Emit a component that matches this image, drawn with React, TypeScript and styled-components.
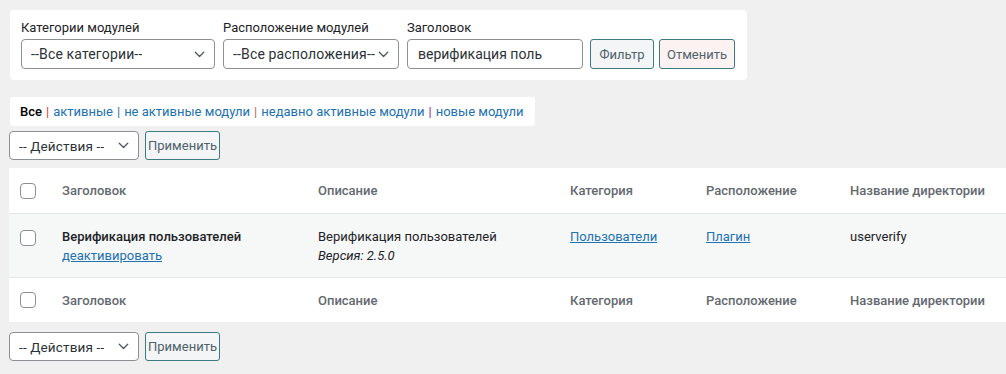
import React from "react";
import styled, { createGlobalStyle } from "styled-components";

const Global = createGlobalStyle`
  html, body { margin: 0; padding: 0; background: #f0f0f1; }
  body { font-family: Roboto, "Noto Sans", Arial, sans-serif; color: #1d2327; overflow: hidden; }
  * { box-sizing: border-box; }
`;

const Page = styled.div`
  width: 1006px;
  height: 374px;
  padding: 10px 0 0 9px;
  display: flex;
  flex-direction: column;
`;

const FilterPanel = styled.div`
  width: 737px;
  margin-left: 1px;
  background: #fff;
  border-radius: 4px;
  padding: 10px 11px 11px 11px;
  display: flex;
  align-items: flex-end;
  gap: 8px;
`;

const Field = styled.div`
  display: flex;
  flex-direction: column;
  gap: 3px;
`;

const Label = styled.label`
  font-size: 13px;
  color: #1d2327;
  line-height: 16px;
  height: 16px;
`;

const SelectBox = styled.div<{ $w: number; $h?: number; $fs?: number }>`
  width: ${(p) => p.$w}px;
  height: ${(p) => p.$h ?? 30}px;
  border: 1px solid #8c8f94;
  border-radius: 4px;
  background: #fff;
  display: flex;
  align-items: center;
  justify-content: space-between;
  padding: 0 8px 0 9px;
  font-size: ${(p) => p.$fs ?? 14}px;
  color: #2c3338;
  white-space: nowrap;
  overflow: hidden;
`;

const SelectText = styled.span`
  overflow: hidden;
  letter-spacing: 0.15px;
`;

const Input = styled.div`
  width: 176px;
  height: 30px;
  border: 1px solid #8c8f94;
  border-radius: 4px;
  background: #fff;
  padding: 0 10px;
  display: flex;
  align-items: center;
  font-size: 14px;
  color: #2c3338;
`;

const Button = styled.button<{ $w: number; $bg: string; $h?: number }>`
  width: ${(p) => p.$w}px;
  height: ${(p) => p.$h ?? 30}px;
  border: 1px solid #3b7b82;
  border-radius: 3px;
  background: ${(p) => p.$bg};
  color: #50626a;
  font-family: Roboto, Arial, sans-serif;
  font-size: 13px;
  padding: 0;
  cursor: pointer;
`;

const ButtonGroup = styled.div`
  display: flex;
  gap: 5px;
  margin-left: -1px;
`;

const Tabs = styled.div`
  margin-top: 17px;
  margin-left: 1px;
  width: 525px;
  height: 29px;
  background: #fff;
  border-radius: 3px;
  display: flex;
  align-items: center;
  padding-left: 10px;
  font-size: 13px;
`;

const TabCurrent = styled.span`
  font-weight: 500;
  color: #000;
`;

const TabLink = styled.a`
  color: #2271b1;
  text-decoration: none;
`;

const Sep = styled.span<{ $c: string }>`
  color: ${(p) => p.$c};
  margin: 0 4px 0 4px;
`;

const Actions = styled.div`
  display: flex;
  gap: 6px;
  margin-top: 5px;
`;

const Table = styled.div`
  margin-top: 8px;
  width: 1010px;
  background: #fff;
  display: flex;
  flex-direction: column;
`;

const Row = styled.div<{ $h: number; $bg?: string; $top?: boolean }>`
  display: grid;
  grid-template-columns: 53px 256px 252px 136px 144px 1fr;
  height: ${(p) => p.$h}px;
  background: ${(p) => p.$bg ?? "#fff"};
  border-top: ${(p) => (p.$top ? "1px solid #e6e7e8" : "none")};
  align-items: center;
`;

const BodyRow = styled(Row)`
  align-items: start;
  padding-top: 13px;
`;

const Check = styled.span<{ $mt?: number }>`
  display: block;
  width: 16px;
  height: 16px;
  border: 1px solid #8c8f94;
  border-radius: 4px;
  background: #fff;
  margin-left: 11px;
  margin-top: ${(p) => p.$mt ?? 0}px;
`;

const Th = styled.div`
  font-size: 13px;
  font-weight: 500;
  color: #646970;
`;

const Td = styled.div`
  font-size: 13px;
  color: #1d2327;
  line-height: 19px;
  display: flex;
  flex-direction: column;
`;

const Strong = styled.span`
  font-weight: 500;
  color: #1d2327;
`;

const Link = styled.a`
  color: #2271b1;
  text-decoration: underline;
  font-size: 13px;
`;

const Version = styled.em`
  font-style: italic;
  font-size: 13px;
`;

const BottomActions = styled(Actions)`
  margin-top: 10px;
`;

const Chevron = () => (
  <svg width="13" height="13" viewBox="0 0 20 20" fill="none">
    <path d="M3.5 6.5l6.5 6.5 6.5-6.5" stroke="#50575e" strokeWidth="2" strokeLinecap="round" strokeLinejoin="round" />
  </svg>
);

export default function App() {
  return (
    <>
      <Global />
      <Page>
        <FilterPanel>
          <Field>
            <Label>Категории модулей</Label>
            <SelectBox $w={194}>
              <SelectText>--Все категории--</SelectText>
              <Chevron />
            </SelectBox>
          </Field>
          <Field>
            <Label>Расположение модулей</Label>
            <SelectBox $w={176}>
              <SelectText>--Все расположения--</SelectText>
              <Chevron />
            </SelectBox>
          </Field>
          <Field>
            <Label>Заголовок</Label>
            <Input>верификация поль</Input>
          </Field>
          <ButtonGroup>
            <Button $w={64} $bg="#f3f5f6">Фильтр</Button>
            <Button $w={76} $bg="#fcf2f1">Отменить</Button>
          </ButtonGroup>
        </FilterPanel>

        <Tabs>
          <TabCurrent>Все</TabCurrent>
          <Sep $c="#d63638">|</Sep>
          <TabLink>активные</TabLink>
          <Sep $c="#2271b1">|</Sep>
          <TabLink>не активные модули</TabLink>
          <Sep $c="#c9605a">|</Sep>
          <TabLink>недавно активные модули</TabLink>
          <Sep $c="#8a2e8a">|</Sep>
          <TabLink>новые модули</TabLink>
        </Tabs>

        <Actions>
          <SelectBox $w={130} $h={29} $fs={13.5}>
            <SelectText>-- Действия --</SelectText>
            <Chevron />
          </SelectBox>
          <Button $w={75} $h={29} $bg="#f3f5f6">Применить</Button>
        </Actions>

        <Table>
          <Row $h={45}>
            <Check />
            <Th>Заголовок</Th>
            <Th>Описание</Th>
            <Th>Категория</Th>
            <Th>Расположение</Th>
            <Th>Название директории</Th>
          </Row>
          <BodyRow $h={64} $bg="#f6f7f7" $top>
            <Check $mt={3} />
            <Td>
              <Strong>Верификация пользователей</Strong>
              <Link>деактивировать</Link>
            </Td>
            <Td>
              <span>Верификация пользователей</span>
              <Version>Версия: 2.5.0</Version>
            </Td>
            <Td>
              <Link>Пользователи</Link>
            </Td>
            <Td>
              <Link>Плагин</Link>
            </Td>
            <Td>
              <span>userverify</span>
            </Td>
          </BodyRow>
          <Row $h={45} $top>
            <Check />
            <Th>Заголовок</Th>
            <Th>Описание</Th>
            <Th>Категория</Th>
            <Th>Расположение</Th>
            <Th>Название директории</Th>
          </Row>
        </Table>

        <BottomActions>
          <SelectBox $w={130} $h={29} $fs={13.5}>
            <SelectText>-- Действия --</SelectText>
            <Chevron />
          </SelectBox>
          <Button $w={75} $h={29} $bg="#f3f5f6">Применить</Button>
        </BottomActions>
      </Page>
    </>
  );
}
